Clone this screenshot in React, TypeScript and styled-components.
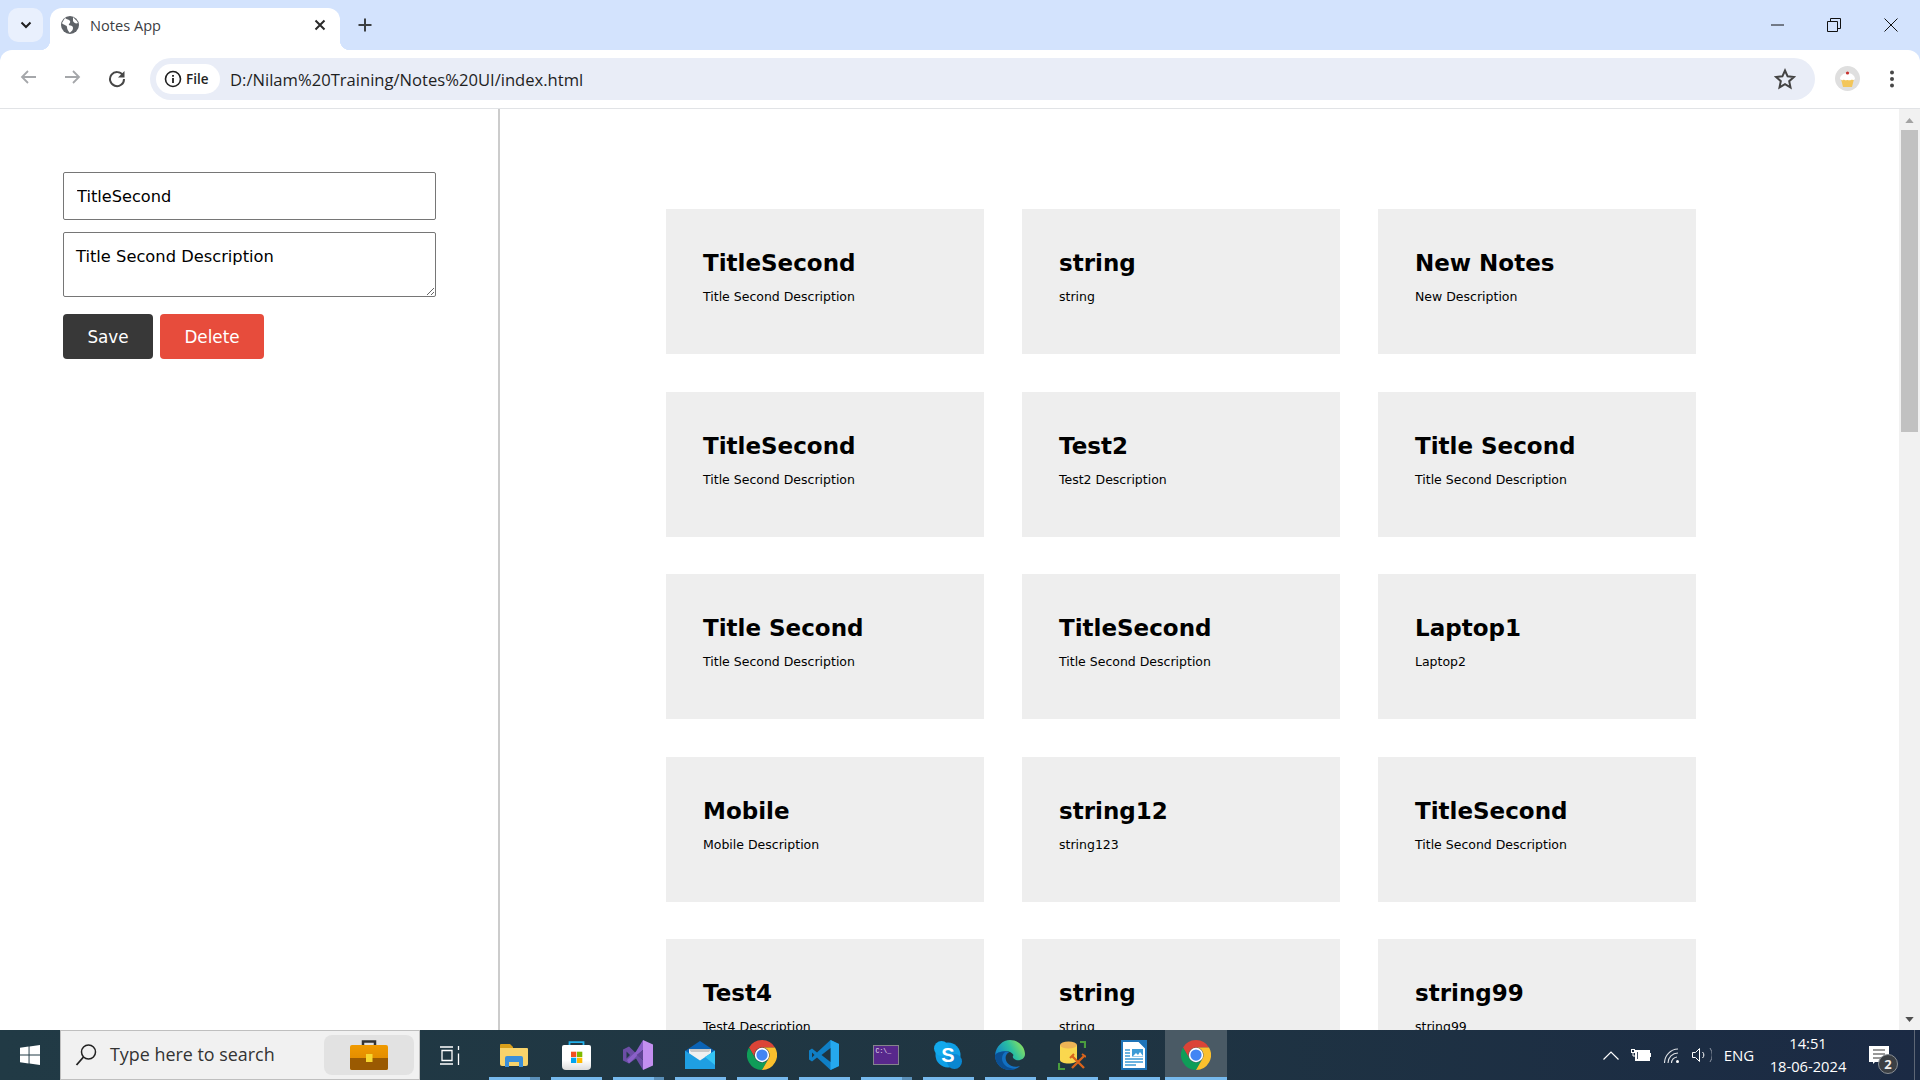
import type { ReactNode } from "react";
import styled, { createGlobalStyle } from "styled-components";

const GlobalStyle = createGlobalStyle`
  html, body {
    margin: 0;
    padding: 0;
    height: 100%;
    overflow: hidden;
    background: #fff;
  }
  * { box-sizing: border-box; }
`;

const Screen = styled.div`
  width: 1920px;
  height: 1080px;
  display: flex;
  flex-direction: column;
  overflow: hidden;
  font-family: "DejaVu Sans", Verdana, sans-serif;
`;

/* browser chrome */
const TabStrip = styled.div`
  height: 50px;
  flex: none;
  display: flex;
  align-items: flex-end;
  background: #d3e3fd;
  padding-left: 8px;
`;
const TabSearch = styled.div`
  width: 35px;
  height: 34px;
  margin-bottom: 8px;
  margin-right: 7px;
  border-radius: 10px;
  background: #e9f0fd;
  display: flex;
  align-items: center;
  justify-content: center;
`;
const Tab = styled.div`
  position: relative;
  width: 290px;
  height: 42px;
  padding: 0 11px 8px 11px;
  display: flex;
  align-items: center;
  background: #fff;
  border-radius: 12px 12px 0 0;
  &::before, &::after {
    content: "";
    position: absolute;
    bottom: 0;
    width: 10px;
    height: 10px;
  }
  &::before { left: -10px; background: radial-gradient(circle at 0 0, transparent 10px, #fff 10.5px); }
  &::after { right: -10px; background: radial-gradient(circle at 100% 0, transparent 10px, #fff 10.5px); }
`;
const TabTitle = styled.span`
  flex: 1;
  margin-left: 7px;
  font-family: "Open Sans", sans-serif;
  font-size: 14.6px;
  color: #3c4043;
`;
const NewTab = styled.div`
  margin: 0 0 8px 9px;
  width: 32px;
  height: 34px;
  display: flex;
  align-items: center;
  justify-content: center;
`;
const WindowControls = styled.div`
  margin-left: auto;
  align-self: flex-start;
  height: 50px;
  display: flex;
  align-items: center;
  padding-right: 1px;
`;
const WindowButton = styled.div`
  width: 56.5px;
  display: flex;
  justify-content: center;
`;
const Toolbar = styled.div`
  height: 59px;
  flex: none;
  display: flex;
  align-items: center;
  padding: 0 0 1px 0;
  background: #d3e3fd;
  border-bottom: 1px solid #e1e3e6;
  position: relative;
  &::before {
    content: "";
    position: absolute;
    inset: 0;
    background: #fff;
    border-radius: 12px 12px 0 0;
  }
  > * { position: relative; }
`;
const NavButton = styled.div`
  width: 44.5px;
  display: flex;
  justify-content: center;
`;
const NavGroup = styled.div`
  display: flex;
  padding-left: 6px;
  width: 150px;
`;
const Omnibox = styled.div`
  width: 1665px;
  height: 42px;
  border-radius: 21px;
  background: #e9edf7;
  display: flex;
  align-items: center;
  padding: 0 16px 0 6px;
`;
const SiteChip = styled.div`
  width: 64px;
  height: 30px;
  border-radius: 15px;
  background: #fff;
  display: flex;
  align-items: center;
  gap: 4px;
  padding-left: 8px;
  font-family: "Open Sans", sans-serif;
  font-size: 13.5px;
  font-weight: 600;
  color: #1f1f1f;
`;
const Url = styled.span`
  margin-left: 10px;
  padding-top: 1px;
  flex: 1;
  font-family: "Open Sans", sans-serif;
  font-size: 16.6px;
  color: #1f1f1f;
`;
const ToolbarEnd = styled.div`
  display: flex;
  align-items: center;
  padding-left: 20px;
  gap: 29px;
`;

/* notes page */
const Page = styled.div`
  flex: 1;
  min-height: 0;
  display: flex;
  background: #fff;
`;
const Sidebar = styled.form`
  width: 500px;
  flex: none;
  border-right: 2px solid #ccc;
  padding: 63px 0 0 63px;
  display: flex;
  flex-direction: column;
`;
const TitleField = styled.input`
  width: 373px;
  height: 48px;
  padding: 0 13px;
  border: 1px solid #767676;
  border-radius: 2px;
  outline: none;
  font-family: "DejaVu Sans", Verdana, sans-serif;
  font-size: 16.2px;
  color: #000;
`;
const DescField = styled.textarea`
  width: 373px;
  height: 65px;
  margin: 12px 0 0;
  padding: 14px 12px;
  border: 1px solid #767676;
  border-radius: 2px;
  outline: none;
  font-family: "DejaVu Sans", Verdana, sans-serif;
  font-size: 16.3px;
  color: #000;
`;
const Actions = styled.div`
  display: flex;
  gap: 7px;
  margin-top: 17px;
`;
const ActionButton = styled.button<{ $bg: string; $w: number }>`
  width: ${p => p.$w}px;
  height: 45px;
  padding: 1px 0 0;
  border: none;
  border-radius: 4px;
  background: ${p => p.$bg};
  color: #fff;
  font-family: "DejaVu Sans", Verdana, sans-serif;
  font-size: 16.8px;
`;
const NotesArea = styled.div`
  flex: 1;
  min-width: 0;
  overflow: hidden;
  padding: 100px 0 0 166px;
`;
const NotesGrid = styled.div`
  display: grid;
  grid-template-columns: repeat(3, 318px);
  grid-auto-rows: 145px;
  column-gap: 38px;
  row-gap: 37.6px;
`;
const Card = styled.article`
  background: #eee;
  padding: 38px 20px 0 37px;
`;
const CardTitle = styled.h2`
  margin: 0;
  font-size: 23px;
  line-height: 32px;
  font-weight: 700;
  color: #000;
`;
const CardText = styled.p`
  margin: 10px 0 0;
  font-size: 12.5px;
  line-height: 16px;
  color: #000;
`;
const Scrollbar = styled.div`
  width: 21px;
  flex: none;
  display: flex;
  flex-direction: column;
  align-items: center;
  background: #f1f1f1;
  padding: 9px 0 8px;
`;
const ScrollThumb = styled.div`
  width: 17px;
  height: 302px;
  margin-top: 7px;
  background: #c1c1c1;
`;
const ScrollSpacer = styled.div`
  flex: 1;
`;

/* windows taskbar */
const Taskbar = styled.div`
  height: 50px;
  flex: none;
  display: flex;
  align-items: stretch;
  background: linear-gradient(90deg, #213a45 0%, #1f3542 55%, #1b2a44 100%);
`;
const StartButton = styled.div`
  width: 60px;
  display: flex;
  align-items: center;
  justify-content: center;
`;
const SearchBox = styled.div`
  width: 360px;
  display: flex;
  align-items: center;
  padding: 0 5px 0 14px;
  background: #f1f1f1;
  border: 1px solid #bfbfbf;
`;
const SearchText = styled.span`
  margin: 0 0 2px 13px;
  flex: 1;
  font-family: "Open Sans", sans-serif;
  font-size: 17.9px;
  color: #333;
`;
const SearchBadge = styled.div`
  width: 90px;
  height: 40px;
  border-radius: 8px;
  background: #e2e2e2;
  display: flex;
  align-items: center;
  justify-content: center;
`;
const AppSlots = styled.div`
  display: flex;
  padding-left: 1px;
`;
const AppSlot = styled.div<{ $active?: boolean }>`
  position: relative;
  width: 62px;
  display: flex;
  align-items: center;
  justify-content: center;
  background: ${p => (p.$active ? "#4a5a65" : "transparent")};
`;
const Underline = styled.span<{ $stacked?: boolean; $full?: boolean }>`
  position: absolute;
  left: ${p => (p.$full ? 0 : 5.5)}px;
  right: ${p => (p.$full ? 0 : 5.5)}px;
  bottom: 0;
  height: 3px;
  background: ${p => p.$stacked ? "linear-gradient(90deg, #76b9ed 0 calc(100% - 10px), #5a8fb8 calc(100% - 10px))" : "#76b9ed"};
`;
const Tray = styled.div`
  margin-left: auto;
  display: flex;
  align-items: center;
  color: #fff;
  padding-right: 5px;
`;
const TrayIcon = styled.div<{ $w: number }>`
  width: ${p => p.$w}px;
  display: flex;
  justify-content: center;
`;
const TrayLang = styled.span`
  width: 46px;
  text-align: center;
  font-family: "Open Sans", sans-serif;
  font-size: 15px;
`;
const Clock = styled.div`
  width: 92px;
  text-align: center;
  font-family: "Open Sans", sans-serif;
  font-size: 14.7px;
  line-height: 23px;
`;
const Notify = styled.div`
  position: relative;
  width: 52px;
  margin-left: 4px;
  display: flex;
  justify-content: center;
`;
const NotifyBadge = styled.span`
  position: absolute;
  left: 20px;
  top: 8px;
  width: 20px;
  height: 20px;
  border-radius: 50%;
  background: #3b3f44;
  border: 1px solid #8a8f94;
  display: flex;
  align-items: center;
  justify-content: center;
  font-family: "Open Sans", sans-serif;
  font-size: 13px;
  font-weight: 700;
  color: #eee;
`;
const DesktopEdge = styled.span`
  width: 1px;
  align-self: stretch;
  margin-left: 4px;
  background: #5d6675;
`;

const notes = [
  ["TitleSecond", "Title Second Description"],
  ["string", "string"],
  ["New Notes", "New Description"],
  ["TitleSecond", "Title Second Description"],
  ["Test2", "Test2 Description"],
  ["Title Second", "Title Second Description"],
  ["Title Second", "Title Second Description"],
  ["TitleSecond", "Title Second Description"],
  ["Laptop1", "Laptop2"],
  ["Mobile", "Mobile Description"],
  ["string12", "string123"],
  ["TitleSecond", "Title Second Description"],
  ["Test4", "Test4 Description"],
  ["string", "string"],
  ["string99", "string99"],
];

const Chrome = () => (
  <svg width="30" height="30" viewBox="0 0 48 48">
    <path d="M24 0A24 24 0 0 0 3.200 12L13.600 30A12 12 0 0 1 24 12H44.800A24 24 0 0 0 24 0Z" fill="#db4437" />
    <path d="M3.200 12A24 24 0 0 0 24 48L34.400 30A12 12 0 0 1 13.600 30Z" fill="#0f9d58" />
    <path d="M44.800 12H24A12 12 0 0 1 34.400 30L24 48A24 24 0 0 0 44.800 12Z" fill="#fbc02d" />
    <circle cx="24" cy="24" r="11.500" fill="#fff" />
    <circle cx="24" cy="24" r="9" fill="#4285f4" />
  </svg>
);

const apps: { key: string; icon: ReactNode; stacked?: boolean; active?: boolean }[] = [
  {
    key: "folder",
    stacked: true,
    icon: (
      <svg width="28" height="23" viewBox="0 0 28 23">
        <path d="M0 1a1 1 0 0 1 1-1h9l3 3v2H0z" fill="#d99f1a" />
        <path d="M0 4h27a1 1 0 0 1 1 1v15a2 2 0 0 1-2 2H2a2 2 0 0 1-2-2z" fill="#f8d36a" />
        <path d="M5 23V14a2 2 0 0 1 2-2h14a2 2 0 0 1 2 2v9h-4v-5H9v5z" fill="#3b8fd8" />
      </svg>
    ),
  },
  {
    key: "store",
    icon: (
      <svg width="29" height="29" viewBox="0 0 29 29">
        <defs>
          <linearGradient id="bag" x1="0" y1="0" x2="0" y2="1">
            <stop offset="0.6" stopColor="#fff" />
            <stop offset="1" stopColor="#dcdcdc" />
          </linearGradient>
        </defs>
        <path d="M7.500 6V1.200h14V6" fill="none" stroke="#22b0ea" strokeWidth="1.800" />
        <path d="M0 6a2 2 0 0 1 2-2h25a2 2 0 0 1 2 2v19a4 4 0 0 1-4 4H4a4 4 0 0 1-4-4z" fill="url(#bag)" />
        <rect x="9" y="10.700" width="5.300" height="5.300" fill="#f25022" />
        <rect x="15" y="10.700" width="5.300" height="5.300" fill="#7fba00" />
        <rect x="9" y="16.700" width="5.300" height="5.300" fill="#00a4ef" />
        <rect x="15" y="16.700" width="5.300" height="5.300" fill="#ffb900" />
      </svg>
    ),
  },
  {
    key: "vs",
    stacked: true,
    icon: (
      <svg width="30" height="30" viewBox="0 0 30 30">
        <path d="M0 9.500L6 6.500 20 20V30L13 18.500 6 23.500 0 20.500z" fill="#6c4ea6" />
        <path d="M20 0V10L6 23.500 4 20 13 11.500z" fill="#8a60c8" />
        <path d="M20 0L30 4.500V25.500L20 30z" fill="#c38ff0" />
        <path d="M20 10L13.500 15 20 20z" fill="#5f4494" />
        <path d="M3.500 11.500v7L7 15z" fill="#24384a" />
      </svg>
    ),
  },
  {
    key: "mail",
    icon: (
      <svg width="30" height="28" viewBox="0 0 30 28">
        <path d="M0 10L15 0l15 10v3H0z" fill="#0b63b5" />
        <path d="M4 8h22v9l-11 6-11-6z" fill="#f1f1f1" />
        <path d="M4 8h22l-2 3H6z" fill="#c9c9c9" />
        <path d="M0 9.500l15 10 15-10V28H0z" fill="#1f9fe3" />
        <path d="M30 9.500V24L20 16z" fill="#35c4f4" />
      </svg>
    ),
  },
  { key: "chrome", icon: <Chrome /> },
  {
    key: "code",
    icon: (
      <svg width="30" height="30" viewBox="0 0 30 30">
        <path d="M21.500 0L8 12.500 3 8.500 0 10.500v9L3 21.500l5-4L21.500 30 30 26V4z" fill="#0f7fc6" />
        <path d="M21.500 0L30 4V26L21.500 30z" fill="#25a8ef" />
        <path d="M21.500 8L12.500 15l9 7z" fill="#1f3542" />
        <path d="M3 12.500L5.500 15 3 17.500z" fill="#1f3542" />
      </svg>
    ),
  },
  {
    key: "terminal",
    stacked: true,
    icon: (
      <svg width="26" height="20" viewBox="0 0 26 20">
        <rect x="0.500" y="0.500" width="25" height="19" fill="#58288c" stroke="#85848c" />
        <text x="2.500" y="8" fontFamily="Liberation Mono, monospace" fontSize="6.500" fill="#e8e4f0">C:\_</text>
      </svg>
    ),
  },
  {
    key: "skype",
    icon: (
      <svg width="28" height="28" viewBox="0 0 28 28">
        <circle cx="14" cy="14" r="12.500" fill="#0f9fe6" />
        <circle cx="7.500" cy="7.500" r="7.500" fill="#12a9ec" />
        <circle cx="20.500" cy="20.500" r="7.500" fill="#0a86d1" />
        <text x="14" y="21" textAnchor="middle" fontFamily="Liberation Sans, sans-serif" fontWeight="700" fontSize="20" fill="#fff">S</text>
      </svg>
    ),
  },
  {
    key: "edge",
    icon: (
      <svg width="30" height="30" viewBox="0 0 30 30">
        <defs>
          <linearGradient id="edgeTop" x1="0" y1="0.700" x2="1" y2="0.300">
            <stop offset="0" stopColor="#0f7fd0" />
            <stop offset="0.550" stopColor="#2bbfa0" />
            <stop offset="1" stopColor="#8fe25c" />
          </linearGradient>
        </defs>
        <path d="M0 15C1 6 8 0 15 0c9 0 15 7 15 14 0 5-5 7-9 6-3-1-4-3-2.500-5-2-4-8-5-12-2.500C3 14 1 18 0 15z" fill="url(#edgeTop)" />
        <path d="M0 15c0 9 7 15 15 15 4 0 8-2 10-4-5 2-10 0-12.500-3-3-4-2.500-9 2-11-5-2-13 0-14.500 3z" fill="#1270c2" />
        <path d="M0 15c0 9 7 15 15 15 2 0 4-.5 6-1.300C12 29 7 24 7 18.500 7 15 9 12.500 11 11.500 6 11 1 13 0 15z" fill="#0b4f92" />
      </svg>
    ),
  },
  {
    key: "db",
    icon: (
      <svg width="28" height="29" viewBox="0 0 28 29">
        <path d="M22 1h5v6M1 22v6h6" fill="none" stroke="#4a9d3e" strokeWidth="2.200" />
        <path d="M2 4h17v15c0 2-4 3.500-8.500 3.500S2 21 2 19z" fill="#fad74e" />
        <ellipse cx="10.500" cy="4" rx="8.500" ry="3.500" fill="#eeb456" />
        <path d="M14 15l12 12M26 15L14 27" stroke="#d9641c" strokeWidth="2.400" fill="none" />
        <path d="M12 17l4-4M24 13l4 3" stroke="#d9641c" strokeWidth="2" fill="none" />
      </svg>
    ),
  },
  {
    key: "writer",
    icon: (
      <svg width="26" height="30" viewBox="0 0 26 30">
        <path d="M1 1h17l7 7v21H1z" fill="#fff" stroke="#1f74b8" strokeWidth="2" />
        <path d="M17 0h9v9z" fill="#1f74b8" />
        <path d="M4 10h5M4 13h5M4 16h5M4 19h18M4 22h18M4 25h11" stroke="#3d9bd6" strokeWidth="1.400" />
        <path d="M11 9h11v7.500H11z" fill="#3d9bd6" />
        <path d="M12 16l3-3 2 2 2-3 3 4z" fill="#fff" />
      </svg>
    ),
  },
  { key: "chrome-active", active: true, icon: <Chrome /> },
];

export default function App() {
  return (
    <Screen>
      <GlobalStyle />
      <TabStrip>
        <TabSearch>
          <svg width="12" height="8" viewBox="0 0 12 8">
            <path d="M1.500 1.500L6 6l4.500-4.500" fill="none" stroke="#1f1f1f" strokeWidth="2" />
          </svg>
        </TabSearch>
        <Tab>
          <svg width="18" height="18" viewBox="0 0 18 18" style={{ marginRight: 4 }}>
            <circle cx="9" cy="9" r="9" fill="#5f6368" />
            <path d="M4 2c2 2 4 1 5 3s-2 3-1 4 4 0 4 3-3 4-3 5c-2-2-3-4-3-6S2 9 1 7zM12 1c1 2 4 3 5 6-2 1-4 0-5-2z" fill="#fff" />
          </svg>
          <TabTitle>Notes App</TabTitle>
          <svg width="18" height="18" viewBox="0 0 18 18">
            <path d="M4.500 4.500l9 9M13.500 4.500l-9 9" stroke="#2a2a2a" strokeWidth="2" />
          </svg>
        </Tab>
        <NewTab>
          <svg width="16" height="16" viewBox="0 0 16 16">
            <path d="M8 1.500v13M1.500 8h13" stroke="#3c4043" strokeWidth="2" />
          </svg>
        </NewTab>
        <WindowControls>
          <WindowButton>
            <svg width="14" height="2" viewBox="0 0 14 2"><path d="M0 1h13" stroke="#111" strokeWidth="1" /></svg>
          </WindowButton>
          <WindowButton>
            <svg width="14" height="14" viewBox="0 0 14 14">
              <path d="M0.500 3.500h10v10h-10zM3.500 3.500v-3h10v10h-3" fill="none" stroke="#111" />
            </svg>
          </WindowButton>
          <WindowButton>
            <svg width="14" height="14" viewBox="0 0 14 14"><path d="M0.500 0.500l13 13M13.500 0.500l-13 13" stroke="#111" /></svg>
          </WindowButton>
        </WindowControls>
      </TabStrip>
      <Toolbar>
        <NavGroup>
          <NavButton>
            <svg width="16" height="14" viewBox="0 0 16 14"><path d="M16 7H2M8 1L2 7l6 6" fill="none" stroke="#a5a7aa" strokeWidth="1.800" /></svg>
          </NavButton>
          <NavButton>
            <svg width="16" height="14" viewBox="0 0 16 14"><path d="M0 7h14M8 1l6 6-6 6" fill="none" stroke="#a5a7aa" strokeWidth="1.800" /></svg>
          </NavButton>
          <NavButton>
            <svg width="18" height="18" viewBox="0 0 18 18">
              <path d="M15 5.500A7 7 0 1 0 16 9" fill="none" stroke="#474747" strokeWidth="2" />
              <path d="M16.500 1v6.500H10z" fill="#474747" />
            </svg>
          </NavButton>
        </NavGroup>
        <Omnibox>
          <SiteChip>
            <svg width="18" height="18" viewBox="0 0 18 18">
              <circle cx="9" cy="9" r="7.500" fill="none" stroke="#1f1f1f" strokeWidth="1.600" />
              <path d="M9 8v5M9 5v1.800" stroke="#1f1f1f" strokeWidth="1.800" />
            </svg>
            File
          </SiteChip>
          <Url>D:/Nilam%20Training/Notes%20UI/index.html</Url>
          <svg width="22" height="22" viewBox="0 0 22 22" style={{ marginRight: 3 }}>
            <path d="M11 2.500l2.600 5.800 6.300.7-4.700 4.200 1.300 6.200L11 16.200l-5.500 3.200 1.300-6.200L2.100 9l6.300-.7z" fill="none" stroke="#444" strokeWidth="2" />
          </svg>
        </Omnibox>
        <ToolbarEnd>
          <svg width="25" height="25" viewBox="0 0 25 25">
            <circle cx="12.500" cy="12.500" r="12.500" fill="#dfdfdf" />
            <path d="M6 13h13l-2 8H8z" fill="#f3c65a" />
            <path d="M5 13c0-3 3-6 7.500-6S20 10 20 13c-2 2-3 0-4 1-2 1-3-.5-4 0-2 1-3-1-4 0-1 .5-2 0-3-1z" fill="#fff" />
            <circle cx="12.500" cy="7" r="1.600" fill="#c8322e" />
          </svg>
          <svg width="6" height="18" viewBox="0 0 6 18">
            <circle cx="3" cy="2.500" r="2" fill="#474747" />
            <circle cx="3" cy="9" r="2" fill="#474747" />
            <circle cx="3" cy="15.500" r="2" fill="#474747" />
          </svg>
        </ToolbarEnd>
      </Toolbar>
      <Page>
        <Sidebar>
          <TitleField defaultValue="TitleSecond" />
          <DescField defaultValue="Title Second Description" />
          <Actions>
            <ActionButton type="button" $bg="#383838" $w={90}>Save</ActionButton>
            <ActionButton type="button" $bg="#e74c3c" $w={104}>Delete</ActionButton>
          </Actions>
        </Sidebar>
        <NotesArea>
          <NotesGrid>
            {notes.map(([title, text], i) => (
              <Card key={i}>
                <CardTitle>{title}</CardTitle>
                <CardText>{text}</CardText>
              </Card>
            ))}
          </NotesGrid>
        </NotesArea>
        <Scrollbar>
          <svg width="9" height="5" viewBox="0 0 10 6"><path d="M5 0l5 6H0z" fill="#a3a3a3" /></svg>
          <ScrollThumb />
          <ScrollSpacer />
          <svg width="9" height="5" viewBox="0 0 10 6"><path d="M0 0h10L5 6z" fill="#505050" /></svg>
        </Scrollbar>
      </Page>
      <Taskbar>
        <StartButton>
          <svg width="20" height="20" viewBox="0 0 21 21">
            <path d="M0 3l9-1.300V10H0zM10 1.500L21 0v10H10zM0 11h9v8.300L0 18zM10 11h11v10l-11-1.500z" fill="#fff" />
          </svg>
        </StartButton>
        <SearchBox>
          <svg width="22" height="24" viewBox="0 0 22 24">
            <circle cx="13.500" cy="9" r="7" fill="none" stroke="#222" strokeWidth="1.500" />
            <path d="M8.500 14L1.500 22" stroke="#222" strokeWidth="1.800" />
          </svg>
          <SearchText>Type here to search</SearchText>
          <SearchBadge>
            <svg width="38" height="30" viewBox="0 0 38 30">
              <defs>
                <linearGradient id="caseTop" x1="0" y1="0" x2="0" y2="1">
                  <stop offset="0" stopColor="#f09a00" />
                  <stop offset="1" stopColor="#d98300" />
                </linearGradient>
              </defs>
              <path d="M13 5V1.500h12V5" fill="none" stroke="#333" strokeWidth="2.500" />
              <rect x="0" y="5" width="38" height="25" rx="2" fill="url(#caseTop)" />
              <path d="M0 18h38v10a2 2 0 0 1-2 2H2a2 2 0 0 1-2-2z" fill="#9a5a02" />
              <rect x="16" y="14" width="6.500" height="8" fill="#f7d62e" />
            </svg>
          </SearchBadge>
        </SearchBox>
        <AppSlots>
          <AppSlot>
            <svg width="20" height="19" viewBox="0 0 20 19" style={{ marginRight: 4 }}>
              <path d="M0 1h13M0 18h13M2 4.500h10v10H2zM18.500 0v4M18.500 7.500V19" fill="none" stroke="#fff" strokeWidth="1.300" />
            </svg>
          </AppSlot>
          {apps.map(app => (
            <AppSlot key={app.key} $active={app.active}>
              {app.icon}
              <Underline $stacked={app.stacked} $full={app.active} />
            </AppSlot>
          ))}
        </AppSlots>
        <Tray>
          <TrayIcon $w={30}>
            <svg width="16" height="9" viewBox="0 0 16 9"><path d="M0.500 8.500L8 1l7.500 7.500" fill="none" stroke="#fff" strokeWidth="1.200" /></svg>
          </TrayIcon>
          <TrayIcon $w={30}>
            <svg width="20" height="12" viewBox="0 0 20 12">
              <rect x="0.500" y="0.500" width="3" height="3" fill="none" stroke="#fff" />
              <path d="M2 4v3h2" fill="none" stroke="#fff" />
              <rect x="4.500" y="1.500" width="14" height="10" fill="#fff" stroke="#fff" />
              <rect x="6" y="3" width="0.800" height="7" fill="#1b2a44" />
              <rect x="19" y="4" width="1" height="4" fill="#fff" />
            </svg>
          </TrayIcon>
          <TrayIcon $w={31}>
            <svg width="15" height="15" viewBox="0 0 15 15">
              <path d="M0.500 15A14 14 0 0 1 14 1M4 15a10 10 0 0 1 10-10M7.500 15A6 6 0 0 1 13 9" fill="none" stroke="#dfe2e6" strokeWidth="1.100" />
              <circle cx="13.500" cy="13.500" r="1.500" fill="#fff" />
            </svg>
          </TrayIcon>
          <TrayIcon $w={29}>
            <svg width="20" height="14" viewBox="0 0 20 14">
              <path d="M0.500 4.500h3l4-4v13l-4-4h-3z" fill="none" stroke="#fff" />
              <path d="M10.500 4a4 4 0 0 1 0 6" fill="none" stroke="#fff" />
              <path d="M18 0a12 12 0 0 1 0 14" fill="none" stroke="#8d95a3" />
            </svg>
          </TrayIcon>
          <TrayLang>ENG</TrayLang>
          <Clock>
            14:51
            <br />
            18-06-2024
          </Clock>
          <Notify>
            <svg width="20" height="18" viewBox="0 0 20 18" style={{ marginRight: 10 }}>
              <path d="M0 0h20v16H6l-2 2v-2H0z" fill="#fff" />
              <path d="M4 4h12M4 8h12M4 12h8" stroke="#333" />
            </svg>
            <NotifyBadge>2</NotifyBadge>
          </Notify>
          <DesktopEdge />
        </Tray>
      </Taskbar>
    </Screen>
  );
}
